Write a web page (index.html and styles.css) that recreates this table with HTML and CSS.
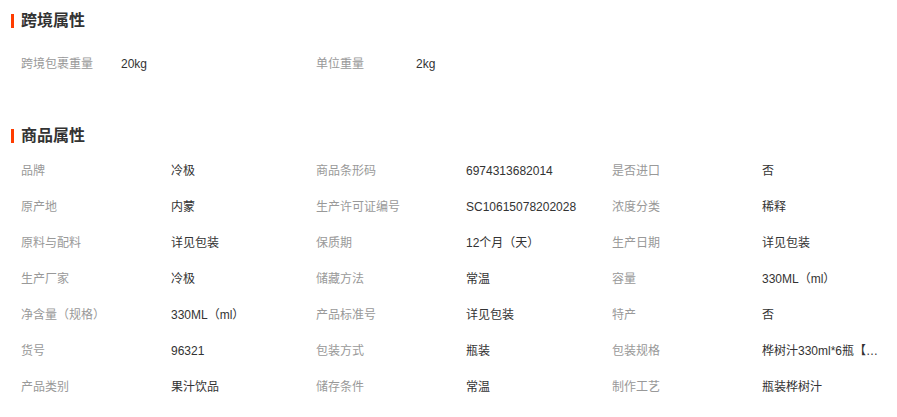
FILE: index.html
```html
<!DOCTYPE html>
<html lang="zh-CN">
<head>
<meta charset="utf-8">
<title>属性</title>
<link rel="stylesheet" href="styles.css">
</head>
<body>
<div class="page">
  <section class="section section-cross">
    <h2 class="section-title"><span class="bar"></span>跨境属性</h2>
    <div class="grid grid-cross">
      <div class="label">跨境包裹重量</div><div class="value">20kg</div>
      <div class="label">单位重量</div><div class="value">2kg</div>
    </div>
  </section>
  <section class="section section-goods">
    <h2 class="section-title"><span class="bar"></span>商品属性</h2>
    <div class="grid grid-goods">
      <div class="label">品牌</div><div class="value">冷极</div>
      <div class="label">商品条形码</div><div class="value">6974313682014</div>
      <div class="label">是否进口</div><div class="value">否</div>

      <div class="label">原产地</div><div class="value">内蒙</div>
      <div class="label">生产许可证编号</div><div class="value">SC10615078202028</div>
      <div class="label">浓度分类</div><div class="value">稀释</div>

      <div class="label">原料与配料</div><div class="value">详见包装</div>
      <div class="label">保质期</div><div class="value">12个月（天）</div>
      <div class="label">生产日期</div><div class="value">详见包装</div>

      <div class="label">生产厂家</div><div class="value">冷极</div>
      <div class="label">储藏方法</div><div class="value">常温</div>
      <div class="label">容量</div><div class="value">330ML（ml）</div>

      <div class="label">净含量（规格）</div><div class="value">330ML（ml）</div>
      <div class="label">产品标准号</div><div class="value">详见包装</div>
      <div class="label">特产</div><div class="value">否</div>

      <div class="label">货号</div><div class="value">96321</div>
      <div class="label">包装方式</div><div class="value">瓶装</div>
      <div class="label">包装规格</div><div class="value" title="桦树汁330ml*6瓶【整箱装】">桦树汁330ml*6瓶【…</div>

      <div class="label">产品类别</div><div class="value">果汁饮品</div>
      <div class="label">储存条件</div><div class="value">常温</div>
      <div class="label">制作工艺</div><div class="value">瓶装桦树汁</div>
    </div>
  </section>
</div>
</body>
</html>
```

FILE: styles.css
```css
html, body {
  margin: 0;
  padding: 0;
  background: #fff;
}
body {
  font-family: "Liberation Sans", "Noto Sans CJK SC", sans-serif;
  font-size: 12px;
  color: #333;
}
.page {
  padding: 11px 0 0 0;
}
.section-title {
  display: flex;
  align-items: center;
  margin: 0 0 0 11px;
  height: 20px;
  line-height: 20px;
  font-size: 16px;
  font-weight: bold;
  color: #333;
}
.bar {
  display: inline-block;
  width: 3px;
  height: 14px;
  background: #ff3c00;
  margin-right: 7px;
}
.grid {
  display: grid;
  padding-left: 21px;
}
.grid .label,
.grid .value {
  height: 36px;
  line-height: 36px;
  white-space: nowrap;
}
.label {
  color: #999;
}
.value {
  color: #333;
}
.section-cross .grid {
  margin-top: 15px;
}
.grid-cross {
  grid-template-columns: 100px 195px 100px 200px;
}
.section-goods {
  margin-top: 44px;
}
.section-goods .grid {
  margin-top: 7px;
}
.grid-goods {
  grid-template-columns: 150px 145px 150px 146px 150px 125px;
}
```
